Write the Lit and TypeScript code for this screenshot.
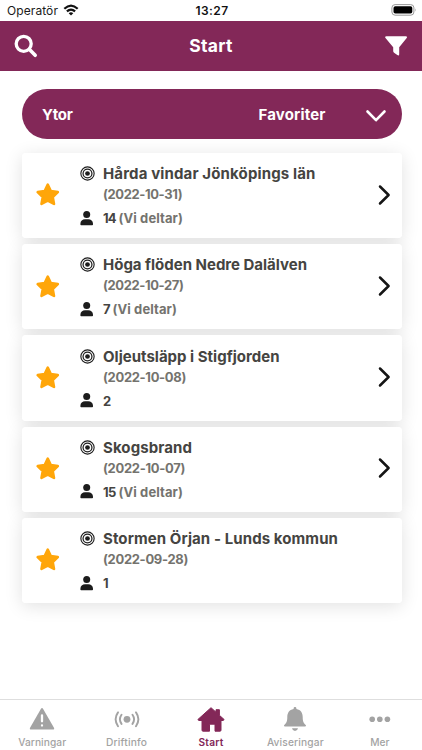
import { LitElement, html, svg, css, nothing } from "lit";
import { customElement, property } from "lit/decorators.js";

interface Incident {
  title: string;
  titleWidth: number;
  date: string;
  dateWidth: number;
  count: string;
  countWidth: number;
  joined?: boolean;
  link?: boolean;
}

const incidents: Incident[] = [
  { title: "Hårda vindar Jönköpings län", titleWidth: 212.5, date: "(2022-10-31)", dateWidth: 79, count: "14", countWidth: 12.5, joined: true, link: true },
  { title: "Höga flöden Nedre Dalälven", titleWidth: 204, date: "(2022-10-27)", dateWidth: 80.5, count: "7", countWidth: 6.5, joined: true, link: true },
  { title: "Oljeutsläpp i Stigfjorden", titleWidth: 176.5, date: "(2022-10-08)", dateWidth: 83, count: "2", countWidth: 7, link: true },
  { title: "Skogsbrand", titleWidth: 89, date: "(2022-10-07)", dateWidth: 82, count: "15", countWidth: 12.5, joined: true, link: true },
  { title: "Stormen Örjan - Lunds kommun", titleWidth: 235, date: "(2022-09-28)", dateWidth: 85, count: "1", countWidth: 5 },
];

/** A single line of text whose tracking is adjusted to a given width. */
@customElement("fit-text")
export class FitText extends LitElement {
  @property() text = "";
  @property({ type: Number }) width = 0;

  static styles = css`
    :host { display: inline-block; white-space: nowrap; }
    .line { display: inline-block; white-space: pre; }
  `;

  render() {
    return html`<span class="line">${this.text}</span>`;
  }

  updated() {
    const line = this.renderRoot.querySelector<HTMLElement>(".line")!;
    line.style.letterSpacing = "0px";
    const natural = line.getBoundingClientRect().width;
    line.style.letterSpacing = `${(this.width - natural) / this.text.length}px`;
  }
}

const star = svg`<path fill="#ffa60a" stroke="#ffa60a" stroke-width="2.4" stroke-linejoin="round" d="M12 2.500l2.900 6.100 6.600.9-4.800 4.600 1.200 6.600-5.900-3.200-5.900 3.200 1.200-6.600-4.800-4.600 6.600-.9z"/>`;

@customElement("incident-card")
export class IncidentCard extends LitElement {
  @property({ attribute: false }) item!: Incident;

  static styles = css`
    :host {
      display: flex;
      align-items: center;
      position: relative;
      box-sizing: border-box;
      height: 85.2px;
      padding: 0 11px 0 12.5px;
      border-radius: 4px;
      background: #fff;
      font-weight: 700;
    }
    :host::before {
      content: "";
      position: absolute;
      inset: 0;
      z-index: -1;
      border-radius: 4px;
      box-shadow: 0 3px 18px rgba(0, 0, 0, 0.12);
    }
    .star { width: 25.5px; height: 25.5px; flex: none; margin-bottom: 1px; }
    .body { flex: 1; margin-left: 20px; }
    .row { display: flex; align-items: center; }
    .icon { width: 15px; height: 15px; flex: none; margin-right: 8px; }
    .title { height: 21px; font-size: 15px; color: #454441; }
    .date { height: 20px; padding-left: 23px; font-size: 13px; color: #74736e; }
    .people { height: 20px; margin-top: 4px; font-size: 13px; color: #454441; }
    .person { width: 15px; height: 17px; flex: none; margin: 0 9px 0 -1px; }
    .joined { margin-left: 3px; color: #74736e; }
    .chevron { width: 14px; height: 22px; flex: none; margin-bottom: 2px; }
  `;

  render() {
    const i = this.item;
    return html`
      <svg class="star" viewBox="0 0 24 24">${star}</svg>
      <div class="body">
        <div class="row title">
          <svg class="icon" viewBox="0 0 14 14" fill="none" stroke="#1c1c1c">
            <circle cx="7" cy="7" r="6.200" stroke-width="1.050"/>
            <circle cx="7" cy="7" r="4.150" stroke-width="1.150"/>
            <circle cx="7" cy="7" r="2.200" fill="#1c1c1c" stroke="none"/>
          </svg>
          <fit-text .text=${i.title} .width=${i.titleWidth}></fit-text>
        </div>
        <div class="row date"><fit-text .text=${i.date} .width=${i.dateWidth}></fit-text></div>
        <div class="row people">
          <svg class="person" viewBox="0 0 15 17" fill="#1c1c1c">
            <circle cx="7.700" cy="4.600" r="3.500"/>
            <path d="M1.400 14.500v-.8c0-2.700 2.100-4.400 4.700-4.400h3.200c2.600 0 4.700 1.700 4.700 4.400v.8q0 .8-.8.8H2.200q-.8 0-.8-.8z"/>
          </svg>
          <fit-text .text=${i.count} .width=${i.countWidth}></fit-text>
          ${i.joined ? html`<fit-text class="joined" .text=${"(Vi deltar)"} .width=${64.5}></fit-text>` : nothing}
        </div>
      </div>
      ${i.link
        ? html`<svg class="chevron" viewBox="0 0 14 22" fill="none" stroke="#151515" stroke-width="2.500" stroke-linecap="round" stroke-linejoin="round"><path d="M3 2.500l8.600 8.500L3 19.500"/></svg>`
        : nothing}
    `;
  }
}

const tabs = [
  {
    label: "Varningar", width: 48,
    icon: svg`<path fill="currentColor" d="M12.700 4.200q1.300-2.200 2.600 0l10.500 18.200q1.200 2.200-1.300 2.200h-21q-2.500 0-1.300-2.200z"/><path stroke="#fff" stroke-width="2.300" stroke-linecap="round" d="M14 10.300v6M14 20.400v.1"/>`,
  },
  {
    label: "Driftinfo", width: 41,
    icon: svg`<circle cx="14" cy="14.300" r="3.400" fill="currentColor"/><g fill="none" stroke="currentColor" stroke-width="1.900" stroke-linecap="round"><path d="M8.500 9.700q-3.200 4.600 0 9.200M19.500 9.700q3.200 4.600 0 9.200M5 7.400q-4.800 6.900 0 13.800M23 7.400q4.800 6.900 0 13.800"/></g>`,
  },
  {
    label: "Start", width: 25, active: true,
    icon: svg`<path fill="currentColor" stroke="currentColor" stroke-width="1" stroke-linejoin="round" d="M14 2.700l5 4.500V4.700h3.400v5.600l4.700 4.200-.8 1h-2.300v9.700q0 1-1 1h-5v-7h-5.500v7H6q-1 0-1-1v-9.700H1.700l-.8-1z"/>`,
  },
  {
    label: "Aviseringar", width: 57,
    icon: svg`<path fill="currentColor" d="M12.600 3.400q0-1.400 1.400-1.400t1.400 1.400v.6c4.500.8 6.300 4 6.300 8 0 4.300.8 6 3 8 .6.600.3 1.500-.6 1.500H3.900c-.9 0-1.200-.9-.6-1.500 2.200-2 3-3.700 3-8 0-4 1.800-7.200 6.300-8zM11 23.200h6q-.5 2.700-3 2.700t-3-2.700z"/>`,
  },
  {
    label: "Mer", width: 19,
    icon: svg`<g fill="currentColor"><circle cx="6.200" cy="14.200" r="2.800"/><circle cx="13.800" cy="14.200" r="2.800"/><circle cx="21.400" cy="14.200" r="2.800"/></g>`,
  },
];

@customElement("app-root")
export class AppRoot extends LitElement {
  static styles = css`
    :host {
      display: flex;
      flex-direction: column;
      height: 100vh;
      overflow: hidden;
      background: #fff;
      font-family: Inter, "Liberation Sans", sans-serif;
    }
    .status {
      display: grid;
      grid-template-columns: 1fr auto 1fr;
      align-items: center;
      flex: none;
      box-sizing: border-box;
      height: 20.700px;
      padding: 0 5px 0 7px;
      font-size: 12px;
      color: #1a1a1a;
    }
    .carrier { display: flex; align-items: center; gap: 5px; }
    .wifi { width: 16px; height: 12px; }
    .clock { font-weight: 600; color: #111; }
    .battery { width: 26px; height: 12px; justify-self: end; }
    .bar {
      display: grid;
      grid-template-columns: 24px 1fr 24px;
      align-items: center;
      justify-items: center;
      flex: none;
      height: 50.600px;
      padding: 0 14px;
      background: #832858;
      color: #fff;
      font-weight: 700;
      font-size: 17.500px;
    }
    .bar svg { width: 24px; height: 24px; }
    main { flex: 1; padding: 17.700px 20px 0 22px; }
    .filter {
      display: flex;
      align-items: center;
      box-sizing: border-box;
      height: 50.500px;
      padding: 0 15px 0 20px;
      border-radius: 25.250px;
      background: #832858;
      color: #fff;
      font-weight: 700;
      font-size: 15px;
    }
    .choice { margin-left: auto; }
    .down { width: 22px; height: 14px; margin: 3px 0 0 39.500px; }
    .list {
      display: grid;
      gap: 6.050px;
      margin-top: 13.500px;
      isolation: isolate;
    }
    nav {
      display: grid;
      grid-template-columns: repeat(5, 1fr);
      flex: none;
      box-sizing: border-box;
      height: 51px;
      padding-top: 5px;
      border-top: 1px solid #dedede;
      background: #fff;
    }
    .tab {
      display: flex;
      flex-direction: column;
      align-items: center;
      color: #a3a3a3;
      font-size: 10.200px;
      font-weight: 500;
    }
    .tab svg { width: 28px; height: 28px; }
    .tab fit-text { margin-top: 2.500px; line-height: 12px; }
    .tab.active { color: #832858; font-weight: 600; }
  `;

  render() {
    return html`
      <div class="status">
        <div class="carrier">
          <fit-text .text=${"Operatör"} .width=${51}></fit-text>
          <svg class="wifi" viewBox="0 0 16 12" fill="none" stroke="#111" stroke-width="2.200">
            <path d="M1.300 4.700q6.700-6.300 13.400 0M3.900 7.400q4.100-3.700 8.200 0"/>
            <path fill="#111" stroke="none" d="M5.700 9.200q2.300-1.800 4.600 0L8 11.500z"/>
          </svg>
        </div>
        <fit-text class="clock" .text=${"13:27"} .width=${33}></fit-text>
        <svg class="battery" viewBox="0 0 26 12">
          <rect x=".9" y=".6" width="22" height="10.600" rx="3.200" fill="#fff" stroke="#999"/>
          <rect x="2.500" y="2.200" width="18.800" height="7.400" rx="1.800" fill="#000"/>
          <path d="M24.300 4.200q1.400 1.700 0 3.400z" fill="#999"/>
        </svg>
      </div>
      <header class="bar">
        <svg viewBox="0 0 24 24" fill="none" stroke="#fff" stroke-linecap="round">
          <circle cx="9.700" cy="9.800" r="7.500" stroke-width="3.300"/>
          <path d="M15.500 15.600l5.700 5.700" stroke-width="3.600"/>
        </svg>
        <fit-text .text=${"Start"} .width=${43.5}></fit-text>
        <svg viewBox="0 0 24 24" fill="#fff">
          <path d="M2.400 2.200h19.400q2.100 0 .9 1.800l-7.500 9.200v7q0 2-1.900.9l-3.200-2.300q-.9-.7-.9-1.700v-3.900L1.500 4Q.300 2.200 2.400 2.200z"/>
        </svg>
      </header>
      <main>
        <div class="filter">
          <fit-text .text=${"Ytor"} .width=${30.5}></fit-text>
          <fit-text class="choice" .text=${"Favoriter"} .width=${67}></fit-text>
          <svg class="down" viewBox="0 0 22 14" fill="none" stroke="#fff" stroke-width="2.600" stroke-linecap="round" stroke-linejoin="round"><path d="M2.500 2.500L11 11.200l8.500-8.700"/></svg>
        </div>
        <div class="list">
          ${incidents.map((i) => html`<incident-card .item=${i}></incident-card>`)}
        </div>
      </main>
      <nav>
        ${tabs.map(
          (t) => html`<div class="tab ${t.active ? "active" : ""}">
            <svg viewBox="0 0 28 28">${t.icon}</svg>
            <fit-text .text=${t.label} .width=${t.width}></fit-text>
          </div>`,
        )}
      </nav>
    `;
  }
}
